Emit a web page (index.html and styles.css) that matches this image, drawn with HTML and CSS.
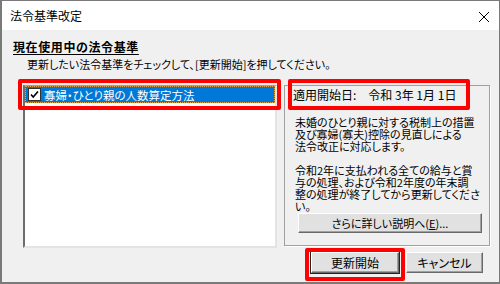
FILE: index.html
```html
<!DOCTYPE html>
<html lang="ja">
<head>
<meta charset="utf-8">
<link rel="stylesheet" href="styles.css">
</head>
<body>
<div class="window">
  <div class="titlebar">
    <span class="title">法令基準改定</span>
    <svg class="close" width="12" height="12" viewBox="0 0 12 12"><path d="M1 1 L11 11 M11 1 L1 11" stroke="#000" stroke-width="1" fill="none"/></svg>
  </div>
  <div class="content">
    <div class="heading">現在使用中の法令基準</div>
    <div class="sub">更新したい法令基準をチェックして、[更新開始]を押してください。</div>
    <div class="main">
      <div class="listbox">
        <div class="item">
          <span class="check"><svg width="11" height="11" viewBox="0 0 11 11"><path d="M2 5.5 L4.2 8 L9 2.5" stroke="#000" stroke-width="1.6" fill="none"/></svg></span>
          <span class="label">寡婦・ひとり親の人数算定方法</span>
        </div>
      </div>
      <div class="panel">
        <div class="date">適用開始日:　令和 3年 1月 1日</div>
        <div class="desc">未婚のひとり親に対する税制上の措置<br>及び寡婦(寡夫)控除の見直しによる<br>法令改正に対応します。<br><br>令和2年に支払われる全ての給与と賞<br>与の処理、および令和2年度の年末調<br>整の処理が終了してから更新してくださ<br>い。</div>
        <button class="btn more">さらに詳しい説明へ(<u>E</u>)...</button>
      </div>
    </div>
    <div class="buttons">
      <button class="btn start">更新開始</button>
      <button class="btn cancel">キャンセル</button>
    </div>
  </div>
  <div class="mark mark1"></div>
  <div class="mark mark2"></div>
  <div class="mark mark3"></div>
</div>
</body>
</html>
```
FILE: styles.css
```css
html, body {
  margin: 0;
  padding: 0;
}
body {
  font-family: "Noto Sans CJK JP", "Noto Sans", sans-serif;
  font-size: 11px;
  font-feature-settings: "palt";
  color: #000;
}
.window {
  position: relative;
  width: 500px;
  height: 284px;
  box-sizing: border-box;
  border: 1px solid #7a7a7a;
  border-left-width: 2px;
  border-bottom-width: 2px;
  background: #f0f0f0;
  overflow: hidden;
}
.titlebar {
  height: 29px;
  background: #fff;
  display: flex;
  align-items: center;
  justify-content: space-between;
  padding: 0 9px 0 8px;
}
.title {
  font-size: 12px;
  line-height: 14px;
  margin-top: 1px;
}
.close {
  display: block;
  margin-top: 2px;
}
.content {
  padding-left: 11px;
}
.heading {
  font-weight: bold;
  font-size: 12px;
  letter-spacing: 0.6px;
  text-decoration: underline;
  text-underline-offset: 2px;
  line-height: 14px;
  padding-top: 10px;
}
.sub {
  line-height: 12px;
  margin-top: 4px;
  margin-left: 14px;
  white-space: nowrap;
}
.main {
  display: flex;
  gap: 7px;
  margin-top: 15px;
  margin-left: 10px;
}
.listbox {
  width: 254px;
  height: 163px;
  box-sizing: border-box;
  background: #fff;
  border-style: solid;
  border-width: 1px 2px 2px 2px;
  border-color: #a0a0a0 #e3e3e3 #e3e3e3 #6d6d6d;
}
.item {
  height: 17px;
  background: #0078d7;
  outline: 1px dotted #e2a34a;
  outline-offset: -1px;
  display: flex;
  align-items: center;
  gap: 3px;
  padding-left: 3px;
}
.check {
  width: 11px;
  height: 11px;
  border: 1px solid #333;
  background: #fff;
  display: flex;
}
.label {
  color: #fff;
  font-size: 11.5px;
  line-height: 12px;
}
.panel {
  width: 206px;
  height: 161px;
  box-sizing: border-box;
  border: 1px solid #a0a0a0;
  box-shadow: 1px 1px 0 #fff;
  padding: 3px 0 0 0;
  display: flex;
  flex-direction: column;
}
.date {
  font-size: 12px;
  line-height: 12px;
  padding-left: 8px;
  white-space: nowrap;
}
.desc {
  line-height: 12px;
  margin-top: 15px;
  padding-left: 10px;
  white-space: nowrap;
}
.btn {
  font-family: inherit;
  font-size: 12px;
  font-feature-settings: "palt";
  background: #e1e1e1;
  border-style: solid;
  border-width: 1px;
  border-color: #fff #696969 #696969 #fff;
  box-shadow: inset -1px -1px 0 #a0a0a0;
  padding: 0;
  margin: 0;
  line-height: 12px;
  color: #000;
}
.more {
  font-size: 11px;
  width: 184px;
  height: 20px;
  margin-top: 1px;
  margin-left: 13px;
}
.buttons {
  display: flex;
  justify-content: flex-end;
  gap: 7px;
  margin-top: 4px;
  padding-right: 16px;
}
.start {
  width: 88px;
  height: 21px;
  outline: 1px solid #222;
  outline-offset: 0;
}
.cancel {
  width: 77px;
  height: 21px;
}
.mark {
  position: absolute;
  border: 4px solid #ff0000;
  border-radius: 2px;
  box-sizing: border-box;
  pointer-events: none;
}
.mark1 {
  left: 16px;
  top: 78px;
  width: 263px;
  height: 31px;
}
.mark2 {
  left: 286px;
  top: 78px;
  width: 182px;
  height: 31px;
}
.mark3 {
  left: 303px;
  top: 247px;
  width: 100px;
  height: 33px;
}
```
